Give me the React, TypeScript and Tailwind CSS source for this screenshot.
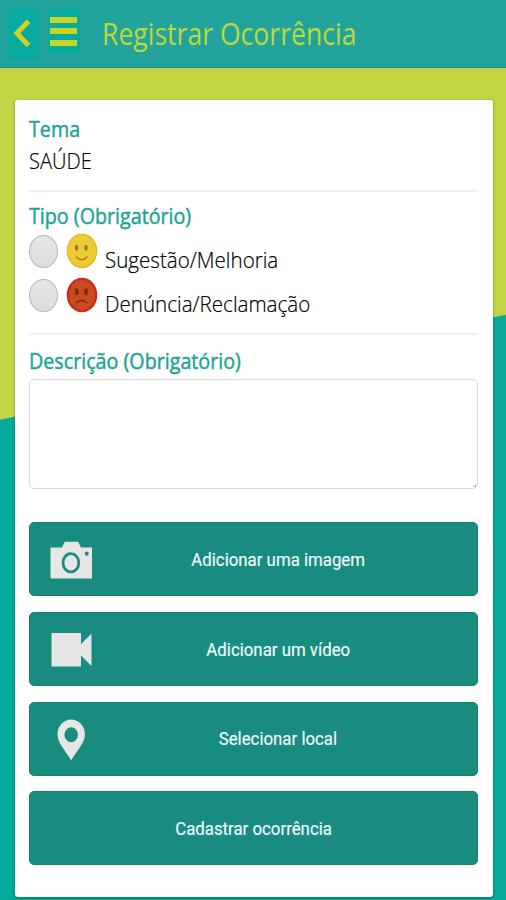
import { useState, type ReactNode } from 'react'

const TIPOS = [
  { id: 'sugestao', label: 'Sugestão/Melhoria', icon: <HappyFace /> },
  { id: 'denuncia', label: 'Denúncia/Reclamação', icon: <SadFace /> },
]

function HappyFace() {
  return (
    <svg width="32" height="36" viewBox="0 0 32 36" fill="none">
      <ellipse cx="16" cy="18" rx="15.3" ry="17.3" fill="#e3b624" />
      <ellipse cx="16" cy="18" rx="14" ry="16" fill="#eccb35" />
      <ellipse cx="10.5" cy="14.8" rx="1.8" ry="3" fill="#9b7d1c" />
      <ellipse cx="20" cy="14.8" rx="1.8" ry="3" fill="#9b7d1c" />
      <path d="M10.3 24Q15.5 29.5 21 24" stroke="#9b7d1c" strokeWidth="1.4" strokeLinecap="round" />
    </svg>
  )
}

function SadFace() {
  return (
    <svg width="32" height="36" viewBox="0 0 32 36" fill="none">
      <ellipse cx="16" cy="18" rx="15.3" ry="17.3" fill="#c52d1c" />
      <ellipse cx="16" cy="18" rx="13" ry="15" fill="#c84c20" />
      <ellipse cx="10.8" cy="15" rx="1.9" ry="3.2" fill="#812a15" />
      <ellipse cx="20" cy="15" rx="1.9" ry="3.2" fill="#812a15" />
      <path d="M8 10.8L12.5 13M23 10.8L18.5 13" stroke="#812a15" strokeWidth="1" />
      <path d="M10.5 25.8Q15.5 21 20.8 25.8" stroke="#812a15" strokeWidth="1.5" strokeLinecap="round" />
    </svg>
  )
}

function CameraIcon() {
  return (
    <svg width="42" height="38" viewBox="0 0 42 38" fill="#e6e6e6">
      <path d="M0.5 6.5H12L14.8 0.8H28L31 6.5H42V37.5H0.5Z" />
      <ellipse cx="20.9" cy="21.8" rx="7.9" ry="9.1" fill="none" stroke="#198c80" strokeWidth="2.8" />
      <ellipse cx="36.7" cy="12.6" rx="2" ry="2.2" fill="#198c80" />
    </svg>
  )
}

function VideoIcon() {
  return (
    <svg width="42" height="36" viewBox="0 0 42 36" fill="#e6e6e6">
      <path d="M1.5 1H31V12L41.5 1.5V34L31 23.5V34.5H1.5Z" />
    </svg>
  )
}

function PinIcon() {
  return (
    <svg width="42" height="42" viewBox="0 0 42 42" fill="#e6e6e6" fillRule="evenodd">
      <path d="M21.2 0.5C13.6 0.5 7.5 7 7.5 15C7.5 24 14.3 30 21.2 41.2C28.1 30 34.9 24 34.9 15C34.9 7 28.8 0.5 21.2 0.5ZM21.2 8.3A6.7 7.5 0 1 1 21.2 23.3A6.7 7.5 0 1 1 21.2 8.3Z" />
    </svg>
  )
}

function SectionTitle({ children }: { children: ReactNode }) {
  return (
    <h2 className="origin-left scale-x-[0.895] whitespace-nowrap text-[22px] leading-[30px] text-[#1ea596] [-webkit-text-stroke:0.5px_#1ea596]">
      {children}
    </h2>
  )
}

function ActionButton({ icon, children }: { icon?: ReactNode; children: ReactNode }) {
  return (
    <button className="flex h-[74px] w-full items-center rounded-[5px] border border-[#128074] bg-[#198c80] font-[Roboto,sans-serif] text-[19px] text-[#eefaf8]">
      {icon && <span className="ml-[20px] w-[29px] shrink-0 pt-[2px]">{icon}</span>}
      <span className="flex flex-1 justify-center pt-[2px]">
        <span className="scale-x-[0.885] whitespace-nowrap [-webkit-text-stroke:0.2px_#eefaf8]">{children}</span>
      </span>
    </button>
  )
}

export default function App() {
  const [tipo, setTipo] = useState('')

  return (
    <div className="flex h-[900px] w-[506px] flex-col overflow-hidden bg-[linear-gradient(168.28deg,#c3d545_calc(50%-81.5px),#04a99c_calc(50%-80.5px))] font-['Open_Sans',sans-serif]">
      <header className="flex h-[68px] shrink-0 items-start border-b border-[#159188] bg-[#22a39b] pl-2 pt-2">
        <button className="flex h-[52px] w-8 items-center rounded-sm bg-[#07aa9f] pl-1">
          <svg width="20" height="32" viewBox="0 0 20 32" fill="none" stroke="#cbd422" strokeWidth="5">
            <path d="M16.5 3.2L4.8 15.2L16.5 27.5" />
          </svg>
        </button>
        <button className="ml-2 flex h-[46px] w-8 flex-col items-center justify-center gap-[5.5px] rounded-sm bg-[#07aa9f] pr-px">
          <span className="h-[6px] w-[27px] bg-[#cbd422]" />
          <span className="h-[6px] w-[27px] bg-[#cbd422]" />
          <span className="h-[6px] w-[27px] bg-[#cbd422]" />
        </button>
        <h1 className="ml-[22px] mt-[4px] origin-left scale-x-[0.857] whitespace-nowrap text-[31px] leading-[42px] text-[#bfd93a]">
          Registrar Ocorrência
        </h1>
      </header>

      <main className="ml-[14.5px] mt-[31.5px] flex h-[797.5px] w-[478px] shrink-0 flex-col rounded-[3px] bg-white px-[14.5px] pt-[13px] shadow-[0_1px_3px_rgba(0,60,30,0.5)]">
        <section className="h-[79px] border-b-2 border-[#f0f0f0]">
          <SectionTitle>Tema</SectionTitle>
          <p className="mt-[2px] origin-left scale-x-[0.915] text-[22px] font-light leading-[30px] text-black [-webkit-text-stroke:0.2px_#000]">
            SAÚDE
          </p>
        </section>

        <section className="h-[143px] border-b-2 border-[#f0f0f0] pt-[8px]">
          <SectionTitle>Tipo (Obrigatório)</SectionTitle>
          {TIPOS.map(t => (
            <label key={t.id} className="flex h-[44px] items-start">
              <input type="radio" name="tipo" className="sr-only" checked={tipo === t.id} onChange={() => setTipo(t.id)} />
              <span
                className={`mt-[5px] flex h-[33px] w-[29px] items-center justify-center rounded-[50%] border-[1.5px] border-[#b5b5b5] bg-linear-to-b from-[#e6e6e6] to-[#dcdcdc] ${
                  tipo === t.id ? 'ring-4 ring-inset ring-[#1ea596]' : ''
                }`}
              />
              <span className="ml-[8px] mt-[3px]">{t.icon}</span>
              <span className="ml-[7px] mt-[14px] origin-left scale-x-[0.935] whitespace-nowrap text-[22px] font-light leading-[30px] text-black [-webkit-text-stroke:0.2px_#000]">
                {t.label}
              </span>
            </label>
          ))}
        </section>

        <section className="pt-[10px]">
          <SectionTitle>Descrição (Obrigatório)</SectionTitle>
          <div className="relative mt-[4px]">
            <textarea className="block h-[110px] w-full resize-none rounded-[5px] border-[1.5px] border-[#dcdcdc] bg-white outline-none" />
            {/* resize grip */}
            <svg className="absolute bottom-[2px] right-[2px]" width="3" height="3" viewBox="0 0 3 3">
              <path d="M3 0V3H0Z" fill="#b4b4b4" />
            </svg>
          </div>
        </section>

        <div className="mt-[33.5px] flex flex-col gap-[15.8px]">
          <ActionButton icon={<CameraIcon />}>Adicionar uma imagem</ActionButton>
          <ActionButton icon={<VideoIcon />}>Adicionar um vídeo</ActionButton>
          <ActionButton icon={<PinIcon />}>Selecionar local</ActionButton>
          <ActionButton>Cadastrar ocorrência</ActionButton>
        </div>
      </main>
    </div>
  )
}
